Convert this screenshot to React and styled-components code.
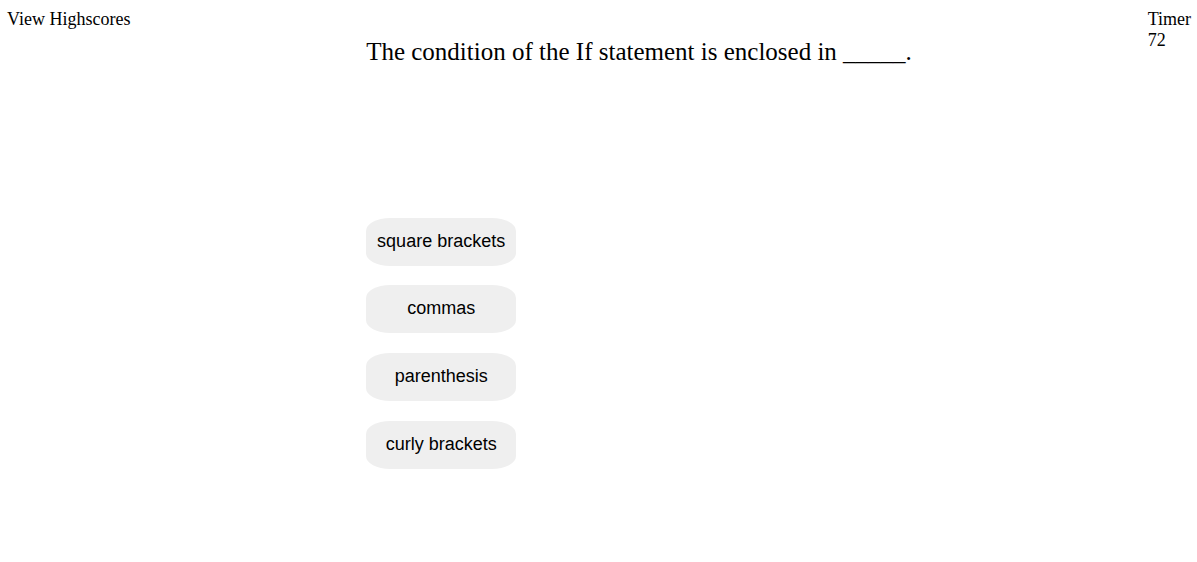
import React from "react";
import styled, { createGlobalStyle } from "styled-components";

const GlobalStyle = createGlobalStyle`
  html, body { margin: 0; padding: 0; background: #fff; }
  body {
    font-family: "Liberation Serif", "Times New Roman", serif;
    font-size: 18px;
    color: #000;
  }
`;

const Header = styled.header`
  display: flex;
  justify-content: space-between;
  align-items: flex-start;
  padding: 8.5px 6px 0 7px;
`;

const HighscoreLink = styled.a`
  color: #000;
  text-decoration: none;
  cursor: pointer;
`;

const Quiz = styled.main`
  display: flex;
  flex-direction: column;
  align-items: flex-start;
`;

const Question = styled.h1`
  margin: 29.5px 0 0;
  font-size: 25px;
  font-weight: normal;
  line-height: normal;
`;

const Answers = styled.div`
  display: flex;
  flex-direction: column;
  gap: 19.7px;
  margin-top: 151.5px;
`;

const AnswerButton = styled.button`
  width: 150px;
  height: 48px;
  border: none;
  border-radius: 24px / 13px;
  background: #efefef;
  color: #000;
  font-family: "Liberation Sans", Arial, sans-serif;
  font-size: 18px;
  padding: 0 0 1px;
  cursor: pointer;
`;

const Timer = styled.div`
  display: flex;
  flex-direction: column;
  line-height: 21px;
`;

const answers = ["square brackets", "commas", "parenthesis", "curly brackets"];

export default function App() {
  return (
    <>
      <GlobalStyle />
      <Header>
        <HighscoreLink>View Highscores</HighscoreLink>
        <Quiz>
          <Question>The condition of the If statement is enclosed in _____.</Question>
          <Answers>
            {answers.map((a) => (
              <AnswerButton key={a}>{a}</AnswerButton>
            ))}
          </Answers>
        </Quiz>
        <Timer>
          <span>Timer</span>
          <span>72</span>
        </Timer>
      </Header>
    </>
  );
}
